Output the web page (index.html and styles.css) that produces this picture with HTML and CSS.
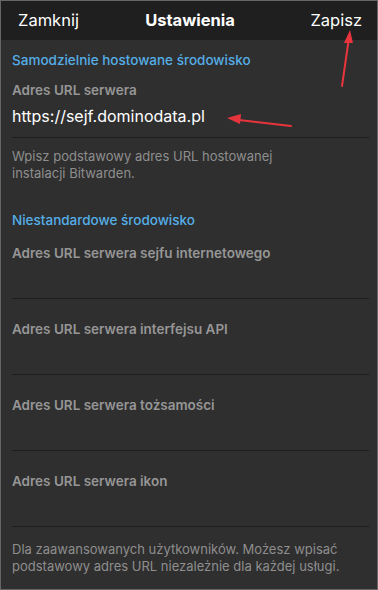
FILE: index.html
```html
<!DOCTYPE html>
<html lang="pl">
<head>
<meta charset="utf-8">
<link rel="stylesheet" href="styles.css">
</head>
<body>
<div class="screen">
  <header class="nav">
    <span class="nav-btn left">Zamknij</span>
    <span class="nav-title">Ustawienia</span>
    <span class="nav-btn right">Zapisz</span>
  </header>
  <main class="content">
    <h2 class="sec-title first">Samodzielnie hostowane środowisko</h2>
    <div class="field filled">
      <div class="label">Adres URL serwera</div>
      <div class="value">https://sejf.dominodata.pl</div>
    </div>
    <p class="help">Wpisz podstawowy adres URL hostowanej instalacji Bitwarden.</p>

    <h2 class="sec-title">Niestandardowe środowisko</h2>
    <div class="field">
      <div class="label">Adres URL serwera sejfu internetowego</div>
    </div>
    <div class="field">
      <div class="label">Adres URL serwera interfejsu API</div>
    </div>
    <div class="field">
      <div class="label">Adres URL serwera tożsamości</div>
    </div>
    <div class="field">
      <div class="label">Adres URL serwera ikon</div>
    </div>
    <p class="help last">Dla zaawansowanych użytkowników. Możesz wpisać podstawowy adres URL niezależnie dla każdej usługi.</p>
  </main>
  <svg class="arrows" width="378" height="590" viewBox="0 0 378 590">
    <line x1="341" y1="85" x2="347.5" y2="40" stroke="#e8343c" stroke-width="2" stroke-linecap="round"/>
    <polygon points="349,29 343,42 352,42" fill="#e8343c"/>
    <line x1="290" y1="125" x2="238" y2="119" stroke="#e8343c" stroke-width="2" stroke-linecap="round"/>
    <polygon points="226,117 240,113 239,123" fill="#e8343c"/>
  </svg>
</div>
</body>
</html>
```
FILE: styles.css
```css
* { box-sizing: border-box; margin: 0; padding: 0; }
html, body { background: #2f2f2f; }
body {
  font-family: Inter, "Noto Sans", "Liberation Sans", sans-serif;
  -webkit-font-smoothing: antialiased;
}
.screen {
  position: relative;
  width: 378px;
  height: 590px;
  border: 1px solid #666;
  background: #2f2f2f;
  overflow: hidden;
}
.nav {
  display: grid;
  grid-template-columns: 1fr auto 1fr;
  align-items: center;
  height: 39px;
  padding: 0 15px 2px 17px;
  background: #1f1f1f;
  color: #fff;
  font-size: 16.5px;
}
.nav-title { font-weight: 700; font-size: 16.5px; }
.nav-btn.right { justify-self: end; }
.content { padding: 0 8px 0 11px; }
.sec-title {
  font-size: 13.5px;
  line-height: 17px;
  font-weight: 500;
  color: #55aee6;
  margin-top: 30px;
}
.sec-title.first { margin-top: 12px; }
.field {
  border-bottom: 1px solid #1e1e1e;
  padding-bottom: 36px;
  margin-top: 22px;
}
.field.filled { margin-top: 13px; padding-bottom: 10px; }
.sec-title + .field:not(.filled) { margin-top: 16px; }
.label {
  font-size: 13.5px;
  line-height: 17px;
  font-weight: 600;
  color: #969696;
}
.value {
  margin-top: 6px;
  font-size: 16px;
  line-height: 22px;
  color: #fff;
}
.help {
  margin-top: 10px;
  font-size: 13px;
  line-height: 17px;
  color: #8e8e8e;
  padding-right: 60px;
}
.help.last { margin-top: 14px; padding-right: 0; }
.arrows { position: absolute; left: 0; top: 0; pointer-events: none; }
```
